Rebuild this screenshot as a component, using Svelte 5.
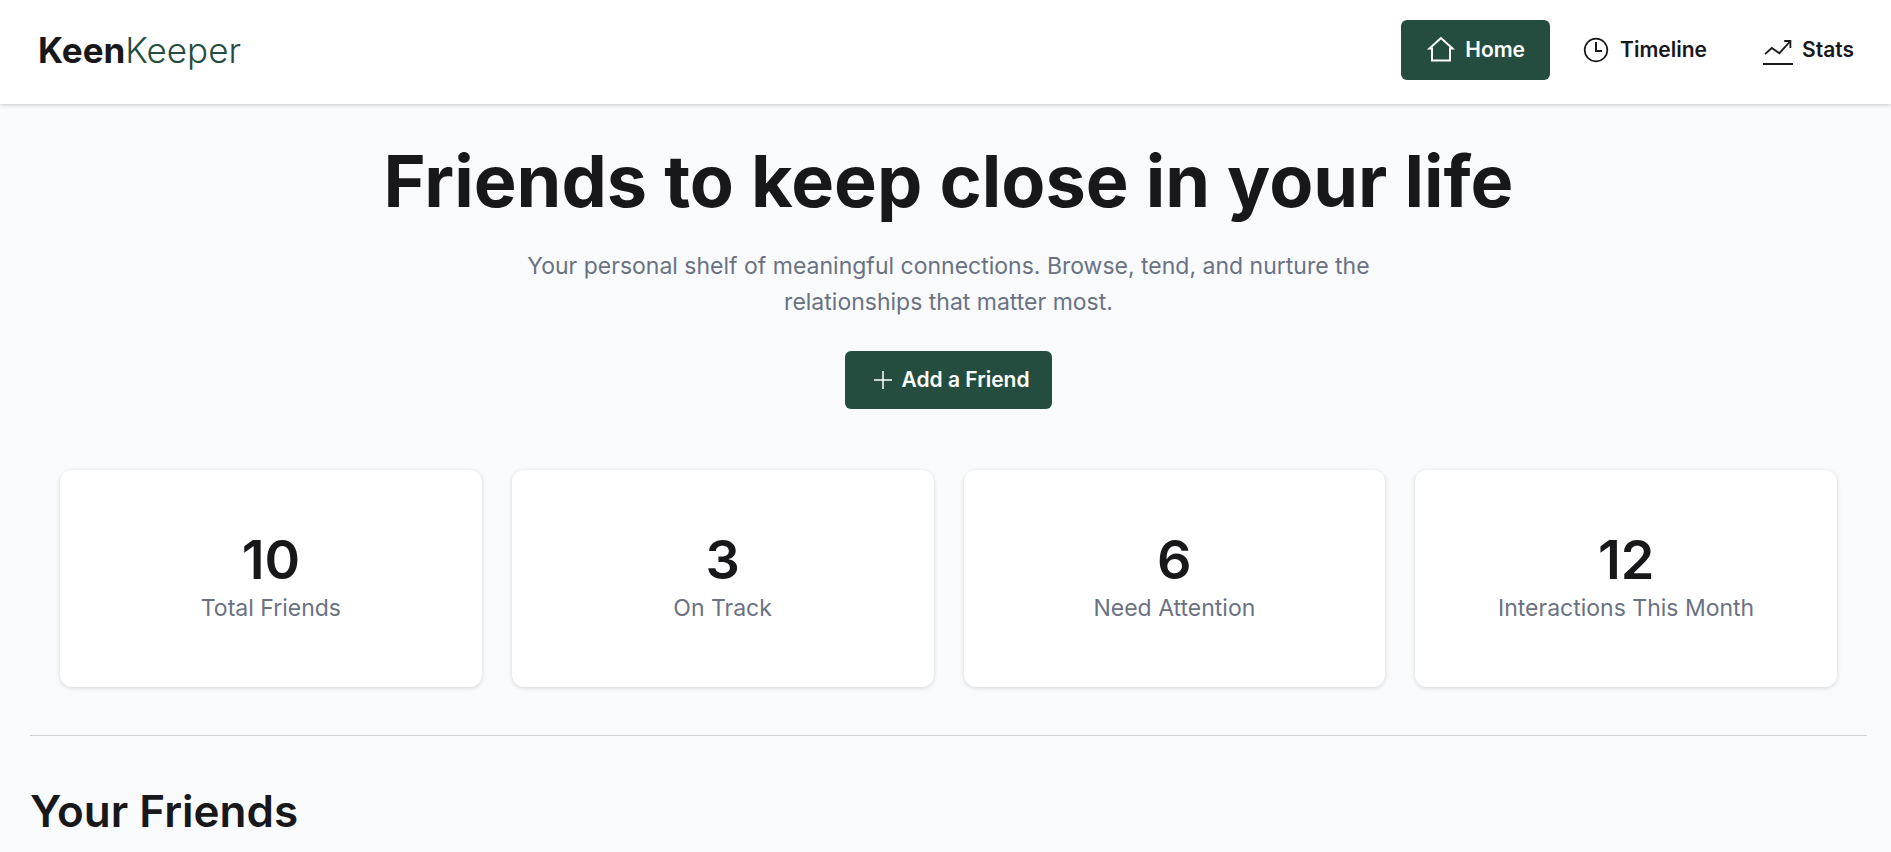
<script>
  const stats = [
    { value: 10, label: 'Total Friends' },
    { value: 3, label: 'On Track' },
    { value: 6, label: 'Need Attention' },
    { value: 12, label: 'Interactions This Month' }
  ];
</script>

<header>
  <a class="brand" href="#home"><b>Keen</b><span>Keeper</span></a>
  <nav aria-label="Main">
    <a class="active" href="#home" aria-current="page">
      <svg width="30" height="30" viewBox="0 0 30 30" fill="none" stroke="currentColor" stroke-width="2" aria-hidden="true">
        <path d="M15 3 3.5 13.5H6V25.5H24V13.5H26.5Z" />
      </svg>
      Home
    </a>
    <a href="#timeline">
      <svg width="30" height="30" viewBox="0 0 30 30" fill="none" stroke="currentColor" aria-hidden="true">
        <circle cx="15" cy="15" r="11.3" stroke-width="1.7" />
        <path d="M15 7v9h6" stroke-width="2" />
      </svg>
      Timeline
    </a>
    <a href="#stats">
      <svg width="30" height="30" viewBox="0 0 30 30" fill="none" stroke="currentColor" stroke-width="1.8" aria-hidden="true">
        <path d="M2 19.2 8.8 13 16.4 18.2 27 6.5" />
        <path d="M21.2 6h6.2v7" />
        <path d="M0 29h30" stroke-width="2" />
      </svg>
      Stats
    </a>
  </nav>
</header>

<main>
  <section class="hero">
    <h1>Friends to keep close in your life</h1>
    <p>Your personal shelf of meaningful connections. Browse, tend, and nurture the relationships that matter most.</p>
    <button type="button">
      <svg width="20" height="20" viewBox="0 0 20 20" fill="none" stroke="currentColor" stroke-width="1.5" aria-hidden="true">
        <path d="M10 1v18M1 10h18" />
      </svg>
      Add a Friend
    </button>
  </section>

  <section class="stats" aria-label="Summary">
    {#each stats as stat}
      <article>
        <strong>{stat.value}</strong>
        <span>{stat.label}</span>
      </article>
    {/each}
  </section>

  <hr />

  <h2>Your Friends</h2>
</main>

<style>
  :global(body) {
    margin: 0;
    background: #f8fafc;
    color: #18181b;
    font-family: Inter, 'Liberation Sans', sans-serif;
  }

  header {
    display: flex;
    align-items: center;
    justify-content: space-between;
    box-sizing: border-box;
    min-height: 104px;
    padding: 20px 12px 24px 38px;
    background: #fff;
    box-shadow: 0 1px 4px rgb(0 0 0 / 20%);
  }

  a {
    color: inherit;
    text-decoration: none;
  }

  .brand {
    font-size: 35px;
    line-height: 40px;
  }

  .brand b {
    font-weight: 700;
  }

  .brand span {
    color: #244d3f;
    font-weight: 300;
  }

  nav {
    display: flex;
    gap: 6px;
  }

  nav a {
    display: flex;
    align-items: center;
    gap: 9px;
    padding: 15px 25px;
    border-radius: 6px;
    font-size: 21px;
    line-height: 30px;
    font-weight: 600;
  }

  nav .active {
    background: #244d3f;
    color: #fff;
  }

  main {
    padding: 41px 24px 24px 30px;
  }

  .hero {
    display: flex;
    flex-direction: column;
    align-items: center;
    text-align: center;
  }

  h1 {
    margin: 0;
    font-size: 72px;
    line-height: 72px;
    font-weight: 700;
  }

  p {
    max-width: 860px;
    margin: 31px 0;
    color: #6a7282;
    font-size: 23px;
    line-height: 36px;
  }

  button {
    display: flex;
    align-items: center;
    gap: 8px;
    padding: 14px 22px 14px 28px;
    border: 0;
    border-radius: 6px;
    background: #244d3f;
    color: #fff;
    font: 600 21px/30px Inter, 'Liberation Sans', sans-serif;
  }

  .stats {
    display: grid;
    grid-template-columns: repeat(4, 1fr);
    gap: 30px;
    padding: 61px 30px 48px;
  }

  article {
    display: flex;
    flex-direction: column;
    align-items: center;
    padding: 60px 24px 61px;
    border-radius: 12px;
    background: #fff;
    box-shadow: 0 1px 4px rgb(0 0 0 / 15%);
  }

  strong {
    font-size: 54px;
    line-height: 60px;
    font-weight: 600;
  }

  article span {
    color: #6a7282;
    font-size: 23px;
    line-height: 36px;
  }

  hr {
    margin: 0;
    border: 0;
    border-top: 1px solid #d1d3d6;
  }

  h2 {
    margin: 48px 0 0;
    font-size: 44px;
    line-height: 54px;
    font-weight: 600;
  }
</style>
